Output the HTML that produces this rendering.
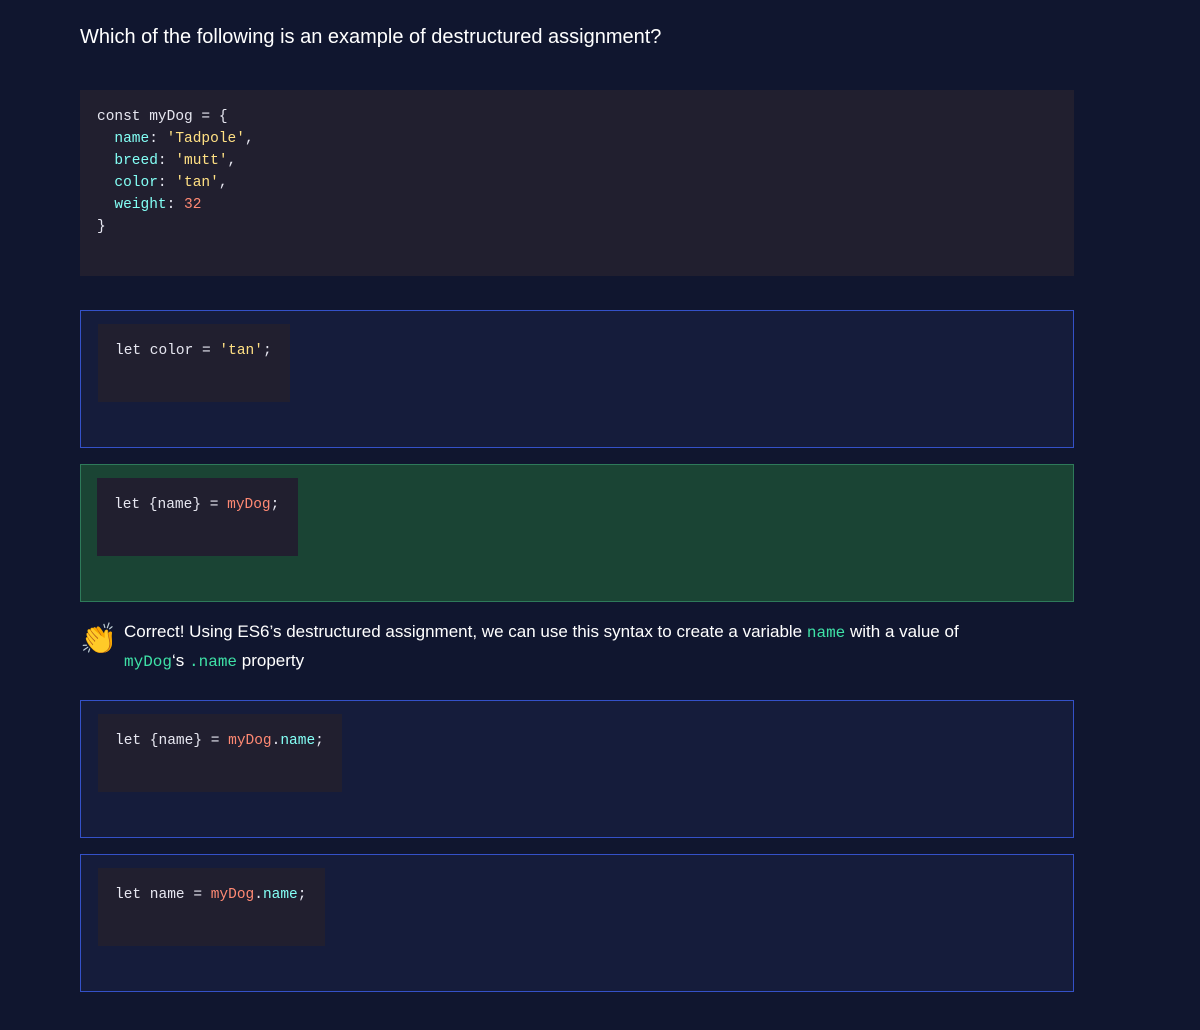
<!DOCTYPE html>
<html><head><style>
body{margin:0;background:#10162f;width:1200px;height:1030px;position:relative;font-family:"Liberation Sans",sans-serif;color:#fff;overflow:hidden}
.q{position:absolute;left:80px;top:26px;font-size:20px}
.mono{font-family:"Liberation Mono",monospace;font-size:14.5px;line-height:22px;white-space:pre;color:#e6e6f0}
.code{position:absolute;background:#211f2f}
.opt{position:absolute;left:80px;width:992px;height:136px;border:1px solid #3451c8;background:#151c3b}
.k{color:#83fff5}.s{color:#ffe083}.n{color:#ff8973}.v{color:#b7b9ff}
.fb{position:absolute;left:124px;top:618px;font-size:17px;line-height:28px}
.g{color:#3ee0a6}.gm{color:#3ee0a6;font-family:"Liberation Mono",monospace;font-size:16px}
</style></head><body>
<div class="q">Which of the following is an example of destructured assignment?</div>
<div class="code mono" style="left:80px;top:90px;width:994px;height:186px;padding:0"><div style="position:absolute;left:17px;top:16px">const myDog = {
  <span class="k">name</span>: <span class="s">'Tadpole'</span>,
  <span class="k">breed</span>: <span class="s">'mutt'</span>,
  <span class="k">color</span>: <span class="s">'tan'</span>,
  <span class="k">weight</span>: <span class="n">32</span>
}</div></div>

<div class="opt" style="top:310px"><div class="code mono" style="left:17px;top:13px;width:192px;height:78px"><div style="position:absolute;left:17px;top:16px">let color = <span class="s">'tan'</span>;</div></div></div>
<div class="opt" style="top:464px;background:#1a4434;border-color:#2e7a5a"><div class="code mono" style="left:16px;top:13px;width:201px;height:78px"><div style="position:absolute;left:17px;top:16px">let {name} = <span class="n">myDog</span>;</div></div></div>

<div style="position:absolute;left:80px;top:622px;font-size:30px;line-height:36px">👏</div>
<div class="fb">Correct! Using ES6’s destructured assignment, we can use this syntax to create a variable <span class="gm">name</span> with a value of<br><span class="gm">myDog</span>‘s <span class="gm">.name</span> property</div>

<div class="opt" style="top:700px"><div class="code mono" style="left:17px;top:13px;width:244px;height:78px"><div style="position:absolute;left:17px;top:16px">let {name} = <span class="n">myDog</span>.<span class="k">name</span>;</div></div></div>
<div class="opt" style="top:854px"><div class="code mono" style="left:17px;top:13px;width:227px;height:78px"><div style="position:absolute;left:17px;top:16px">let name = <span class="n">myDog</span>.<span class="k">name</span>;</div></div></div>
</body></html>
